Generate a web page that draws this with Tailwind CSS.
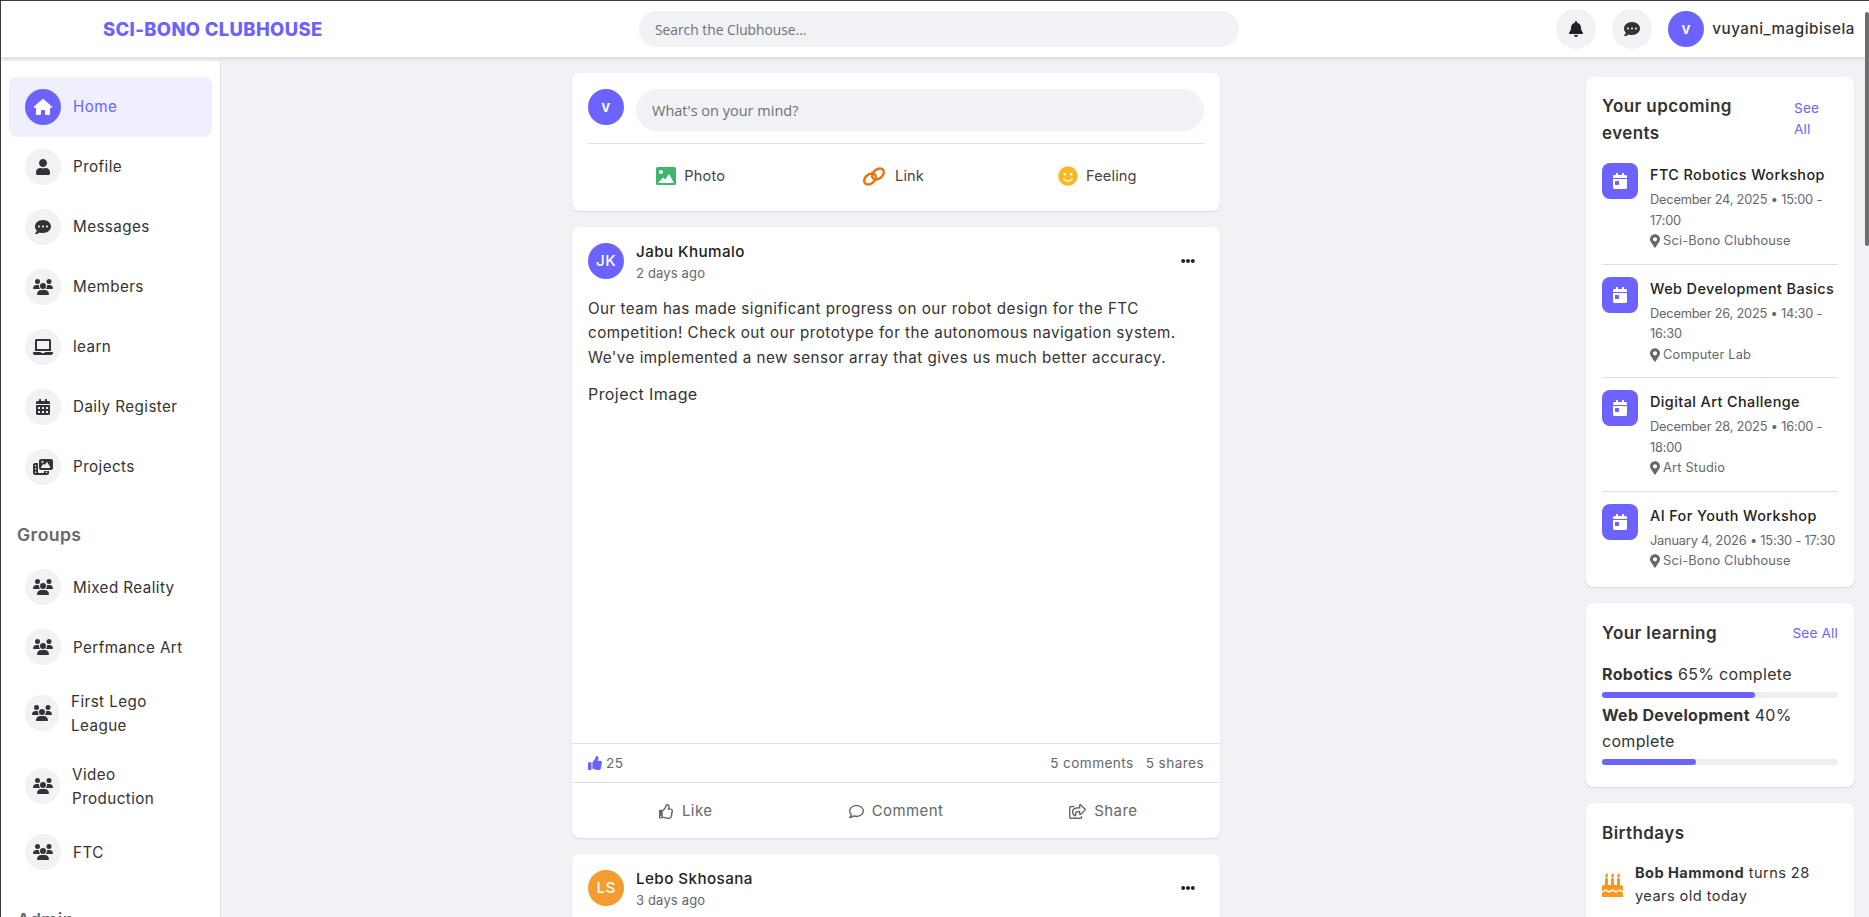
<!DOCTYPE html>
<html lang="en">
<head>
<meta charset="utf-8">
<title>Sci-Bono Clubhouse</title>
<script src="https://cdn.jsdelivr.net/npm/@tailwindcss/browser@4"></script>
</head>
<body class="m-0">
<svg class="hidden" aria-hidden="true">
<symbol id="home" viewBox="0 0 576 512"><path d="M575.8 255.5c0 18-15 32.1-32 32.1h-32l.7 160.2c0 2.7-.2 5.4-.5 8.1V472c0 22.1-17.9 40-40 40H456c-1.1 0-2.2 0-3.3-.1c-1.4 .1-2.8 .1-4.2 .1H416 392c-22.1 0-40-17.9-40-40V448 384c0-17.7-14.3-32-32-32H256c-17.7 0-32 14.3-32 32v64 24c0 22.1-17.9 40-40 40H160 128.1c-1.5 0-3-.1-4.5-.2c-1.2 .1-2.4 .2-3.6 .2H104c-22.1 0-40-17.9-40-40V360c0-.9 0-1.9 .1-2.8V287.6H32c-18 0-32-14-32-32.1c0-9 3-17 10-24L266.4 8c7-7 15-8 22-8s15 2 21 7L564.8 231.5c8 7 12 15 11 24z"/></symbol>
<symbol id="user" viewBox="0 0 448 512"><path d="M224 256c70.7 0 128-57.3 128-128S294.7 0 224 0 96 57.3 96 128s57.3 128 128 128zm89.6 32h-16.7c-22.2 10.2-46.9 16-72.9 16s-50.6-5.8-72.9-16h-16.7C60.2 288 0 348.2 0 422.4V464c0 26.5 21.5 48 48 48h352c26.5 0 48-21.5 48-48v-41.6c0-74.2-60.2-134.4-134.4-134.4z"/></symbol>
<symbol id="dots" viewBox="0 0 512 512"><path d="M256 32C114.6 32 0 125.1 0 240c0 49.6 21.4 95 57 130.7C44.5 421.1 2.7 466 2.2 466.5c-2.2 2.3-2.8 5.7-1.5 8.7S4.8 480 8 480c66.3 0 116-31.8 140.6-51.4 32.7 12.3 69 19.4 107.4 19.4 141.4 0 256-93.1 256-208S397.4 32 256 32zM128 272c-17.7 0-32-14.3-32-32s14.3-32 32-32 32 14.3 32 32-14.3 32-32 32zm128 0c-17.7 0-32-14.3-32-32s14.3-32 32-32 32 14.3 32 32-14.3 32-32 32zm128 0c-17.7 0-32-14.3-32-32s14.3-32 32-32 32 14.3 32 32-14.3 32-32 32z"/></symbol>
<symbol id="users" viewBox="0 0 640 512"><path d="M144 0a80 80 0 1 1 0 160A80 80 0 1 1 144 0zM512 0a80 80 0 1 1 0 160A80 80 0 1 1 512 0zM0 298.7C0 239.8 47.8 192 106.7 192h42.7c15.9 0 31 3.5 44.6 9.7c-1.3 7.2-1.9 14.7-1.9 22.3c0 38.2 16.8 72.5 43.3 96c-.2 0-.4 0-.7 0H21.3C9.6 320 0 310.4 0 298.7zM405.3 320c-.2 0-.4 0-.7 0c26.6-23.5 43.3-57.8 43.3-96c0-7.6-.7-15-1.9-22.3c13.6-6.3 28.7-9.7 44.6-9.7h42.7C592.2 192 640 239.8 640 298.7c0 11.8-9.6 21.3-21.3 21.3H405.3zM224 224a96 96 0 1 1 192 0 96 96 0 1 1 -192 0zM128 485.3C128 411.7 187.7 352 261.3 352H378.7C452.3 352 512 411.7 512 485.3c0 14.7-11.9 26.7-26.7 26.7H154.7c-14.7 0-26.7-11.9-26.7-26.7z"/></symbol>
<symbol id="laptop" viewBox="0 0 640 512"><path d="M624 416H381.54c-.74 19.81-14.71 32-32.74 32H288c-18.69 0-33.02-17.47-32.77-32H16c-8.8 0-16 7.2-16 16v16c0 35.2 28.8 64 64 64h512c35.2 0 64-28.8 64-64v-16c0-8.8-7.2-16-16-16zM576 48c0-26.4-21.6-48-48-48H112C85.6 0 64 21.6 64 48v336h512V48zm-64 272H128V64h384v256z"/></symbol>
<symbol id="calalt" viewBox="0 0 448 512"><path d="M0 464c0 26.5 21.5 48 48 48h352c26.5 0 48-21.5 48-48V192H0v272zm320-196c0-6.6 5.4-12 12-12h40c6.6 0 12 5.4 12 12v40c0 6.6-5.4 12-12 12h-40c-6.6 0-12-5.4-12-12v-40zm0 128c0-6.6 5.4-12 12-12h40c6.6 0 12 5.4 12 12v40c0 6.6-5.4 12-12 12h-40c-6.6 0-12-5.4-12-12v-40zM192 268c0-6.6 5.4-12 12-12h40c6.6 0 12 5.4 12 12v40c0 6.6-5.4 12-12 12h-40c-6.6 0-12-5.4-12-12v-40zm0 128c0-6.6 5.4-12 12-12h40c6.6 0 12 5.4 12 12v40c0 6.6-5.4 12-12 12h-40c-6.6 0-12-5.4-12-12v-40zM64 268c0-6.6 5.4-12 12-12h40c6.6 0 12 5.4 12 12v40c0 6.6-5.4 12-12 12H76c-6.6 0-12-5.4-12-12v-40zm0 128c0-6.6 5.4-12 12-12h40c6.6 0 12 5.4 12 12v40c0 6.6-5.4 12-12 12H76c-6.6 0-12-5.4-12-12v-40zM400 64h-48V16c0-8.8-7.2-16-16-16h-32c-8.8 0-16 7.2-16 16v48H160V16c0-8.8-7.2-16-16-16h-32c-8.8 0-16 7.2-16 16v48H48C21.5 64 0 85.5 0 112v48h448v-48c0-26.5-21.5-48-48-48z"/></symbol>
<symbol id="calday" viewBox="0 0 448 512"><path d="M0 464c0 26.5 21.5 48 48 48h352c26.5 0 48-21.5 48-48V192H0v272zm64-192c0-8.8 7.2-16 16-16h96c8.8 0 16 7.2 16 16v96c0 8.8-7.2 16-16 16H80c-8.8 0-16-7.2-16-16v-96zM400 64h-48V16c0-8.8-7.2-16-16-16h-32c-8.8 0-16 7.2-16 16v48H160V16c0-8.8-7.2-16-16-16h-32c-8.8 0-16 7.2-16 16v48H48C21.5 64 0 85.5 0 112v48h448v-48c0-26.5-21.5-48-48-48z"/></symbol>
<symbol id="photos" viewBox="0 0 640 512"><path d="M256 0H576c35.3 0 64 28.7 64 64V288c0 35.3-28.7 64-64 64H256c-35.3 0-64-28.7-64-64V64c0-35.3 28.7-64 64-64zM476 106.7C471.5 100 464 96 456 96s-15.5 4-20 10.7l-56 84L362.7 169c-4.6-5.7-11.5-9-18.7-9s-14.2 3.3-18.7 9l-64 80c-5.8 7.2-6.9 17.1-2.9 25.4s12.4 13.6 21.6 13.6h80v0H432h0 96c8.9 0 17-4.9 21.2-12.7s3.7-17.3-1.2-24.6l-96-144zM336 96a32 32 0 1 0 -64 0 32 32 0 1 0 64 0zM64 128h96V384v32c0 17.7 14.3 32 32 32H320c17.7 0 32-14.3 32-32V384H512v64c0 35.3-28.7 64-64 64H64c-35.3 0-64-28.7-64-64V192c0-35.3 28.7-64 64-64zm8 64c-8.8 0-16 7.2-16 16v16c0 8.8 7.2 16 16 16H88c8.8 0 16-7.2 16-16V208c0-8.8-7.2-16-16-16H72zm0 104c-8.8 0-16 7.2-16 16v16c0 8.8 7.2 16 16 16H88c8.8 0 16-7.2 16-16V312c0-8.8-7.2-16-16-16H72zm0 104c-8.8 0-16 7.2-16 16v16c0 8.8 7.2 16 16 16H88c8.8 0 16-7.2 16-16V416c0-8.8-7.2-16-16-16H72zm336 16v16c0 8.8 7.2 16 16 16h16c8.8 0 16-7.2 16-16V416c0-8.8-7.2-16-16-16H424c-8.8 0-16 7.2-16 16z"/></symbol>
<symbol id="bell" viewBox="0 0 448 512"><path d="M224 512c35.32 0 63.97-28.65 63.97-64H160.03c0 35.35 28.65 64 63.97 64zm215.39-149.71c-19.32-20.76-55.47-51.99-55.47-154.29 0-77.7-54.48-139.9-127.94-155.16V32c0-17.67-14.32-32-31.98-32s-31.98 14.33-31.98 32v20.84C118.56 68.1 64.08 130.3 64.08 208c0 102.3-36.15 133.53-55.47 154.29-6 6.45-8.66 14.16-8.61 21.71.11 16.4 12.98 32 32.1 32h383.8c19.12 0 32-15.6 32.1-32 .05-7.55-2.61-15.27-8.61-21.71z"/></symbol>
<symbol id="pin" viewBox="0 0 384 512"><path d="M172.268 501.67C26.97 291.031 0 262.429 0 192 0 85.961 85.961 0 192 0s192 85.961 192 192c0 70.429-26.97 99.031-172.268 309.67-9.535 13.774-29.93 13.773-39.464 0zM192 272c44.183 0 80-35.817 80-80s-35.817-80-80-80-80 35.817-80 80 35.817 80 80 80z"/></symbol>
<symbol id="more" viewBox="0 0 512 512"><path d="M328 256c0 39.8-32.2 72-72 72s-72-32.2-72-72 32.2-72 72-72 72 32.2 72 72zm104-72c-39.8 0-72 32.2-72 72s32.2 72 72 72 72-32.2 72-72-32.2-72-72-72zm-352 0c-39.8 0-72 32.2-72 72s32.2 72 72 72 72-32.2 72-72-32.2-72-72-72z"/></symbol>
<symbol id="thumbs" viewBox="0 0 512 512"><path d="M104 224H24c-13.255 0-24 10.745-24 24v240c0 13.255 10.745 24 24 24h80c13.255 0 24-10.745 24-24V248c0-13.255-10.745-24-24-24zM384 81.452c0 42.416-25.97 66.208-33.277 94.548h101.723c33.397 0 59.397 27.746 59.553 58.098.084 17.938-7.546 37.249-19.439 49.197l-.11.11c9.836 23.337 8.237 56.037-9.308 79.469 8.681 25.895-.069 57.704-16.382 74.757 4.298 17.598 2.244 32.575-6.148 44.632C440.202 511.587 389.616 512 346.839 512l-2.845-.001c-48.287-.017-87.806-17.598-119.56-31.725-15.957-7.099-36.821-15.887-52.651-16.178-6.54-.12-11.783-5.457-11.783-11.998v-213.77c0-3.2 1.282-6.271 3.558-8.521 39.614-39.144 56.648-80.587 89.117-113.111 14.804-14.832 20.188-37.236 25.393-58.902C282.515 39.293 291.817 0 312 0c24 0 72 8 72 81.452z"/></symbol>
<symbol id="thumbo" viewBox="0 0 512 512"><path d="M466.27 286.69C475.04 271.84 480 256 480 236.85c0-44.015-37.218-85.58-85.82-85.58H357.7c4.92-12.81 8.85-28.13 8.85-46.54C366.55 31.936 328.86 0 271.28 0c-61.607 0-58.093 94.933-71.76 108.6-22.747 22.747-49.615 66.447-68.76 83.4H32c-17.673 0-32 14.327-32 32v240c0 17.673 14.327 32 32 32h64c14.893 0 27.408-10.174 30.978-23.95 44.509 1.001 75.06 39.94 177.802 39.94 7.22 0 15.22.01 22.22.01 77.117 0 111.986-39.423 112.94-95.33 13.319-18.425 20.299-43.122 17.34-66.99 9.854-18.452 13.664-40.343 8.99-62.99zm-61.75 53.83c12.56 21.13 1.26 49.41-13.94 57.57 7.7 48.78-17.608 65.9-53.12 65.9h-37.82c-71.639 0-118.029-37.82-171.64-37.82V240h10.92c28.36 0 67.98-70.89 94.54-97.46 28.36-28.36 18.91-75.63 37.82-94.54 47.27 0 47.27 32.98 47.27 56.73 0 39.17-28.36 56.72-28.36 94.54h103.99c21.11 0 37.73 18.91 37.82 37.82.09 18.9-12.82 37.81-28.36 37.81 22.17 23.93 4.82 59.08-1.12 65.62zM88 432c0 13.255-10.745 24-24 24s-24-10.745-24-24 10.745-24 24-24 24 10.745 24 24z"/></symbol>
<symbol id="commento" viewBox="0 0 512 512"><path d="M256 32C114.6 32 0 125.1 0 240c0 47.6 19.9 91.2 52.9 126.3C38 405.7 7 439.1 6.5 439.5c-6.6 7-8.4 17.2-4.6 26S14.4 480 24 480c61.5 0 110-25.7 139.1-46.3C192 442.8 223.2 448 256 448c141.4 0 256-93.1 256-208S397.4 32 256 32zm0 368c-26.7 0-53.1-4.1-78.4-12.1l-22.7-7.2-19.5 13.8c-14.3 10.1-33.9 21.4-57.5 29 7.3-12.1 14.4-25.7 19.9-40.2l10.6-28.1-20.6-21.8C69.7 314.1 48 282.2 48 240c0-88.2 93.3-160 208-160s208 71.8 208 160-93.3 160-208 160z"/></symbol>
<symbol id="share" viewBox="0 0 576 512"><path d="M561.938 158.06L417.94 14.092C387.926-15.922 336 5.097 336 48.032v57.198c-42.45 1.88-84.03 6.55-120.76 17.99-35.17 10.95-63.07 27.58-82.91 49.42C108.22 199.2 96 232.6 96 271.94c0 61.697 33.178 112.455 84.87 144.76 37.546 23.508 85.248-12.651 71.02-55.74-15.515-47.119-17.156-70.923 84.11-78.76V336c0 42.993 51.968 63.913 81.94 33.94l143.998-144c18.75-18.74 18.75-49.14 0-67.88zM384 336V232.16C255.309 234.082 166.492 255.35 206.31 376 176.79 357.55 144 324.08 144 271.94c0-109.334 129.14-118.947 240-119.85V48l144 144-144 144zm24.74 84.493a82.658 82.658 0 0 0 20.974-9.303c7.976-4.952 18.286.826 18.286 10.214V464c0 26.51-21.49 48-48 48H48c-26.51 0-48-21.49-48-48V112c0-26.51 21.49-48 48-48h132c6.627 0 12 5.373 12 12v4.486c0 4.917-2.987 9.369-7.569 11.152-13.702 5.331-26.396 11.537-38.05 18.585a12.138 12.138 0 0 1-6.28 1.777H54a6 6 0 0 0-6 6v340a6 6 0 0 0 6 6h340a6 6 0 0 0 6-6v-25.966c0-5.37 3.579-10.059 8.74-11.541z"/></symbol>
<symbol id="cake" viewBox="0 0 448 512"><path d="M448 384c-28.02 0-31.26-32-74.5-32-43.43 0-46.825 32-74.75 32-27.695 0-31.454-32-74.75-32-42.842 0-47.218 32-74.5 32-28.148 0-31.202-32-74.75-32-43.547 0-46.653 32-74.75 32v-80c0-26.5 21.5-48 48-48h16V112h64v144h64V112h64v144h64V112h64v144h16c26.5 0 48 21.5 48 48v80zm0 128H0v-96c43.356 0 46.767-32 74.75-32 27.951 0 31.253 32 74.75 32 42.843 0 47.217-32 74.5-32 28.148 0 31.201 32 74.75 32 43.357 0 46.767-32 74.75-32 27.488 0 31.252 32 74.5 32v96zM96 96c-17.75 0-32-14.25-32-32 0-31 32-23 32-64 12 0 32 29.5 32 56s-14.25 40-32 40zm128 0c-17.75 0-32-14.25-32-32 0-31 32-23 32-64 12 0 32 29.5 32 56s-14.25 40-32 40zm128 0c-17.75 0-32-14.25-32-32 0-31 32-23 32-64 12 0 32 29.5 32 56s-14.25 40-32 40z"/></symbol>
<symbol id="smile" viewBox="0 0 496 512"><path d="M248 8C111 8 0 119 0 256s111 248 248 248 248-111 248-248S385 8 248 8zm80 168c17.7 0 32 14.3 32 32s-14.3 32-32 32-32-14.3-32-32 14.3-32 32-32zm-160 0c17.7 0 32 14.3 32 32s-14.3 32-32 32-32-14.3-32-32 14.3-32 32-32zm194.8 170.2C334.3 380.4 292.5 400 248 400s-86.3-19.6-114.8-53.8c-13.6-16.3 11-36.7 24.6-20.5 22.4 26.9 55.2 42.2 90.2 42.2s67.8-15.4 90.2-42.2c13.4-16.2 38.1 4.2 24.6 20.5z"/></symbol>
</svg>

<div class="relative h-[917px] w-[1869px] overflow-hidden border-t border-l border-[#3a3a3f] bg-[#f0f2f5] font-[Inter,sans-serif] text-[#333] text-[15.2px] leading-[24.3px] tracking-[0.028em] flex flex-col">

  <!-- Header -->
  <header class="relative z-10 h-14 shrink-0 bg-white shadow-[0_2px_4px_rgba(0,0,0,0.1)] flex items-center">
    <div class="w-[638px] pl-[102px] text-[18.4px] font-extrabold text-[#6c63ff] tracking-[0.02em] whitespace-nowrap">SCI-BONO CLUBHOUSE</div>
    <div class="w-[600px] h-9 rounded-full bg-[#f0f2f5] pl-4 pt-0.5 flex items-center font-['Open_Sans',sans-serif] text-[13.8px] tracking-normal text-[#6f7175] whitespace-nowrap">Search the Clubhouse...</div>
    <div class="ml-auto flex items-center pr-[14px]">
      <div class="w-10 h-10 rounded-full bg-[#f0f2f5] flex items-center justify-center text-[#1f1f1f]"><svg class="w-[14px] h-4 fill-current"><use href="#bell"/></svg></div>
      <div class="w-10 h-10 ml-4 rounded-full bg-[#f0f2f5] flex items-center justify-center text-[#333]"><svg class="w-4 h-4 fill-current"><use href="#dots"/></svg></div>
      <div class="w-9 h-9 ml-4 rounded-full bg-[#6c63ff] text-white font-semibold flex items-center justify-center">v</div>
      <div class="ml-2 text-[15.2px] font-medium text-[#333] tracking-[0.035em] whitespace-nowrap">vuyani_magibisela</div>
    </div>
  </header>

  <div class="flex flex-1 min-h-0 mt-1">
    <!-- Sidebar -->
    <aside class="w-[220px] shrink-0 bg-white border-r border-[#dddfe2] px-2 pt-4 overflow-hidden">
      <a class="flex items-center gap-3 h-[60px] px-4 rounded-lg bg-[#f0efff] text-[#6c63ff]">
        <span class="w-9 h-9 rounded-full bg-[#6c63ff] text-white flex items-center justify-center"><svg class="w-[18px] h-4 fill-current"><use href="#home"/></svg></span><span>Home</span>
      </a>
      <a class="flex items-center gap-3 h-[60px] px-4">
        <span class="w-9 h-9 rounded-full bg-[#f0f2f5] flex items-center justify-center"><svg class="w-[14px] h-4 fill-current"><use href="#user"/></svg></span><span>Profile</span>
      </a>
      <a class="flex items-center gap-3 h-[60px] px-4">
        <span class="w-9 h-9 rounded-full bg-[#f0f2f5] flex items-center justify-center"><svg class="w-4 h-4 fill-current"><use href="#dots"/></svg></span><span>Messages</span>
      </a>
      <a class="flex items-center gap-3 h-[60px] px-4">
        <span class="w-9 h-9 rounded-full bg-[#f0f2f5] flex items-center justify-center"><svg class="w-5 h-4 fill-current"><use href="#users"/></svg></span><span>Members</span>
      </a>
      <a class="flex items-center gap-3 h-[60px] px-4">
        <span class="w-9 h-9 rounded-full bg-[#f0f2f5] flex items-center justify-center"><svg class="w-5 h-4 fill-current"><use href="#laptop"/></svg></span><span>learn</span>
      </a>
      <a class="flex items-center gap-3 h-[60px] px-4">
        <span class="w-9 h-9 rounded-full bg-[#f0f2f5] flex items-center justify-center"><svg class="w-[14px] h-4 fill-current"><use href="#calalt"/></svg></span><span>Daily Register</span>
      </a>
      <a class="flex items-center gap-3 h-[60px] px-4">
        <span class="w-9 h-9 rounded-full bg-[#f0f2f5] flex items-center justify-center"><svg class="w-5 h-4 fill-current"><use href="#photos"/></svg></span><span>Projects</span>
      </a>

      <h3 class="mt-6 mb-2 pl-2 h-7 text-[17.6px] leading-7 font-semibold text-[#65676b]">Groups</h3>
      <a class="flex items-center gap-3 h-[60px] px-4">
        <span class="w-9 h-9 rounded-full bg-[#f0f2f5] flex items-center justify-center"><svg class="w-5 h-4 fill-current"><use href="#users"/></svg></span><span class="pt-0.5">Mixed Reality</span>
      </a>
      <a class="flex items-center gap-3 h-[60px] px-4">
        <span class="w-9 h-9 rounded-full bg-[#f0f2f5] flex items-center justify-center"><svg class="w-5 h-4 fill-current"><use href="#users"/></svg></span><span class="pt-0.5">Perfmance Art</span>
      </a>
      <a class="flex items-center gap-3 h-[72.6px] px-4">
        <span class="w-[34px] h-9 rounded-full bg-[#f0f2f5] flex items-center justify-center"><svg class="w-5 h-4 fill-current"><use href="#users"/></svg></span><span class="pt-0.5">First Lego<br>League</span>
      </a>
      <a class="flex items-center gap-3 h-[72.6px] px-4">
        <span class="w-[35px] h-9 rounded-full bg-[#f0f2f5] flex items-center justify-center"><svg class="w-5 h-4 fill-current"><use href="#users"/></svg></span><span class="pt-0.5">Video<br>Production</span>
      </a>
      <a class="flex items-center gap-3 h-[60px] px-4">
        <span class="w-9 h-9 rounded-full bg-[#f0f2f5] flex items-center justify-center"><svg class="w-5 h-4 fill-current"><use href="#users"/></svg></span><span class="pt-0.5">FTC</span>
      </a>
      <h3 class="mt-6 pl-2 h-7 text-[17.6px] leading-7 font-semibold text-[#65676b]">Admin</h3>
    </aside>

    <!-- Feed -->
    <main class="w-[648px] ml-[351px] pt-3 shrink-0">
      <section class="rounded-lg bg-white shadow-[0_1px_2px_rgba(0,0,0,0.1)] h-[138px] px-4 pt-4 mb-4">
        <div class="flex gap-3">
          <div class="w-9 h-9 rounded-full bg-[#6c63ff] text-white font-semibold flex items-center justify-center">v</div>
          <div class="flex-1 h-[42px] rounded-full bg-[#f0f2f5] pl-4 pt-0.5 flex items-center font-['Open_Sans',sans-serif] text-[14.5px] tracking-normal text-[#6f7175]">What's on your mind?</div>
        </div>
        <div class="mt-3 border-t border-[#dddfe2] grid grid-cols-3 h-[66px] items-center text-[#444] text-[14.6px] tracking-[0.01em]">
          <div class="flex items-center justify-center gap-2">
            <svg class="w-5 h-[18px]" viewBox="0 0 20 18"><rect width="20" height="18" rx="1.5" fill="#3fb66b"/><circle cx="5" cy="5" r="2" fill="#fff"/><path d="M2 16l5-5.5 2.2 2L13 7l5 9z" fill="#fff"/></svg><span>Photo</span>
          </div>
          <div class="flex items-center justify-center gap-[9px] pr-[6px]">
            <svg class="w-6 h-[19px]" viewBox="0 0 24 19" fill="none" stroke="#f0700e" stroke-width="2.4"><ellipse cx="8" cy="12" rx="6.6" ry="4.6" transform="rotate(-40 8 12)"/><ellipse cx="16" cy="7" rx="6.6" ry="4.6" transform="rotate(-40 16 7)"/></svg><span>Link</span>
          </div>
          <div class="flex items-center justify-center gap-2 pr-2">
            <svg class="w-5 h-5 fill-[#f7b928]"><use href="#smile"/></svg><span>Feeling</span>
          </div>
        </div>
      </section>

      <article class="rounded-lg bg-white shadow-[0_1px_2px_rgba(0,0,0,0.1)] h-[611px] mb-4 flex flex-col">
        <div class="px-4 pt-4 flex h-[52px] shrink-0">
          <div class="w-9 h-9 rounded-full bg-[#6c63ff] text-white font-medium flex items-center justify-center">JK</div>
          <div class="ml-3 -mt-px">
            <div class="font-medium leading-5 text-[#222]">Jabu Khumalo</div>
            <div class="mt-px text-[13px] leading-5 tracking-[0.012em] text-[#65676b]">2 days ago</div>
          </div>
          <svg class="ml-auto mr-[9px] mt-[11px] w-[14px] h-[14px] fill-[#222]"><use href="#more"/></svg>
        </div>
        <div class="px-4 pt-[18px] h-[464px] shrink-0">
          <p class="whitespace-nowrap tracking-[0.032em]">Our team has made significant progress on our robot design for the FTC<br>competition! Check out our prototype for the autonomous navigation system.<br>We've implemented a new sensor array that gives us much better accuracy.</p>
          <p class="mt-3 text-[16px] leading-[25.6px]">Project Image</p>
        </div>
        <div class="h-10 border-y border-[#dddfe2] px-4 flex items-center justify-between text-[13.6px] text-[#65676b] shrink-0">
          <div class="flex items-center gap-1"><svg class="w-[14px] h-[14px] fill-[#6c63ff]"><use href="#thumbs"/></svg><span>25</span></div>
          <div class="flex gap-3"><span>5 comments</span><span>5 shares</span></div>
        </div>
        <div class="flex-1 grid grid-cols-3 items-center px-4 pt-0.5 text-[#65676b] text-[15px]">
          <div class="flex items-center justify-center gap-2 pr-[10px]"><svg class="w-[15px] h-[15px] fill-current"><use href="#thumbo"/></svg><span>Like</span></div>
          <div class="flex items-center justify-center gap-2"><svg class="w-[15px] h-[15px] fill-current"><use href="#commento"/></svg><span>Comment</span></div>
          <div class="flex items-center justify-center gap-2 pl-1"><svg class="w-[17px] h-[15px] fill-current"><use href="#share"/></svg><span>Share</span></div>
        </div>
      </article>

      <article class="rounded-lg bg-white shadow-[0_1px_2px_rgba(0,0,0,0.1)] h-[300px]">
        <div class="px-4 pt-4 flex h-[52px]">
          <div class="w-9 h-9 rounded-full bg-[#f49c2f] text-white font-medium flex items-center justify-center">LS</div>
          <div class="ml-3 -mt-px">
            <div class="font-medium leading-5 text-[#222]">Lebo Skhosana</div>
            <div class="mt-px text-[13px] leading-5 tracking-[0.012em] text-[#65676b]">3 days ago</div>
          </div>
          <svg class="ml-auto mr-[9px] mt-[11px] w-[14px] h-[14px] fill-[#222]"><use href="#more"/></svg>
        </div>
      </article>
    </main>

    <!-- Right column -->
    <div class="w-[268px] ml-[366px] pt-4 shrink-0">
      <section class="rounded-lg bg-white shadow-[0_1px_2px_rgba(0,0,0,0.1)] p-4 mb-4 h-[510px]">
        <div class="flex justify-between h-[70px]">
          <h3 class="text-[17px] leading-[27px] font-semibold text-[#333]">Your upcoming<br>events</h3>
          <a class="w-11 pt-[5px] text-[13.6px] leading-[21px] tracking-[0.012em] text-[#6c63ff]">See<br>All</a>
        </div>
        <div class="flex gap-3 pb-3 mb-3 border-b border-[#dddfe2]">
          <div class="w-9 h-9 shrink-0 rounded-lg bg-[#6c63ff] flex items-center justify-center"><svg class="w-[14px] h-4 fill-white"><use href="#calday"/></svg></div>
          <div class="whitespace-nowrap">
            <div class="text-[14.4px] leading-[23px] font-medium mb-1 text-[#222]">FTC Robotics Workshop</div>
            <div class="text-[12.8px] leading-[20.5px] tracking-[-0.015em] text-[#65676b]">December 24, 2025 • 15:00 -<br>17:00</div>
            <div class="text-[12.8px] leading-[20.5px] tracking-[0.015em] text-[#65676b] flex items-center gap-[3px]"><svg class="w-[10px] h-[14px] fill-current"><use href="#pin"/></svg>Sci-Bono Clubhouse</div>
          </div>
        </div>
        <div class="flex gap-3 pb-3 mb-3 border-b border-[#dddfe2]">
          <div class="w-9 h-9 shrink-0 rounded-lg bg-[#6c63ff] flex items-center justify-center"><svg class="w-[14px] h-4 fill-white"><use href="#calday"/></svg></div>
          <div class="whitespace-nowrap">
            <div class="text-[14.4px] leading-[23px] font-medium mb-1 text-[#222]">Web Development Basics</div>
            <div class="text-[12.8px] leading-[20.5px] tracking-[-0.015em] text-[#65676b]">December 26, 2025 • 14:30 -<br>16:30</div>
            <div class="text-[12.8px] leading-[20.5px] tracking-[0.015em] text-[#65676b] flex items-center gap-[3px]"><svg class="w-[10px] h-[14px] fill-current"><use href="#pin"/></svg>Computer Lab</div>
          </div>
        </div>
        <div class="flex gap-3 pb-3 mb-3 border-b border-[#dddfe2]">
          <div class="w-9 h-9 shrink-0 rounded-lg bg-[#6c63ff] flex items-center justify-center"><svg class="w-[14px] h-4 fill-white"><use href="#calday"/></svg></div>
          <div class="whitespace-nowrap">
            <div class="text-[14.4px] leading-[23px] font-medium mb-1 text-[#222]">Digital Art Challenge</div>
            <div class="text-[12.8px] leading-[20.5px] tracking-[-0.015em] text-[#65676b]">December 28, 2025 • 16:00 -<br>18:00</div>
            <div class="text-[12.8px] leading-[20.5px] tracking-[0.015em] text-[#65676b] flex items-center gap-[3px]"><svg class="w-[10px] h-[14px] fill-current"><use href="#pin"/></svg>Art Studio</div>
          </div>
        </div>
        <div class="flex gap-3">
          <div class="w-9 h-9 shrink-0 rounded-lg bg-[#6c63ff] flex items-center justify-center"><svg class="w-[14px] h-4 fill-white"><use href="#calday"/></svg></div>
          <div class="whitespace-nowrap">
            <div class="text-[14.4px] leading-[23px] font-medium mb-1 text-[#222]">AI For Youth Workshop</div>
            <div class="text-[12.8px] leading-[20.5px] tracking-[-0.015em] text-[#65676b]">January 4, 2026 • 15:30 - 17:30</div>
            <div class="text-[12.8px] leading-[20.5px] tracking-[0.015em] text-[#65676b] flex items-center gap-[3px]"><svg class="w-[10px] h-[14px] fill-current"><use href="#pin"/></svg>Sci-Bono Clubhouse</div>
          </div>
        </div>
      </section>

      <section class="rounded-lg bg-white shadow-[0_1px_2px_rgba(0,0,0,0.1)] p-4 mb-4 h-[184px]">
        <div class="flex justify-between items-center h-7">
          <h3 class="text-[17px] font-semibold">Your learning</h3>
          <a class="text-[13.6px] tracking-[0.012em] text-[#6c63ff]">See All</a>
        </div>
        <div class="mt-[15px] leading-[25.6px] text-[16px] tracking-[0.02em] whitespace-nowrap"><b class="font-bold">Robotics</b> 65% complete</div>
        <div class="mt-[4px] h-[6px] rounded-full bg-[#eeeeee]"><div class="h-full rounded-full bg-[#6c63ff]" style="width:65%"></div></div>
        <div class="mt-[4px] leading-[26px] text-[16px] tracking-[0.02em] whitespace-nowrap"><b class="font-bold">Web Development</b> 40%<br>complete</div>
        <div class="mt-[5px] h-[6px] rounded-full bg-[#eeeeee]"><div class="h-full rounded-full bg-[#6c63ff]" style="width:40%"></div></div>
      </section>

      <section class="rounded-lg bg-white shadow-[0_1px_2px_rgba(0,0,0,0.1)] p-4 h-[300px]">
        <h3 class="text-[17px] leading-7 font-semibold">Birthdays</h3>
        <div class="mt-[15px] flex items-center gap-3">
          <svg class="w-[21px] h-6 fill-[#f7971e]"><use href="#cake"/></svg>
          <div class="whitespace-nowrap text-[14.6px] leading-[23px]"><b class="font-bold">Bob Hammond</b> turns 28<br>years old today</div>
        </div>
      </section>
    </div>
  </div>

  <!-- Scrollbar thumb -->
  <div class="absolute z-20 left-[1864px] top-[11px] w-[4px] h-[234px] rounded-full bg-[#6e6e6e]"></div>
</div>
</body>
</html>
